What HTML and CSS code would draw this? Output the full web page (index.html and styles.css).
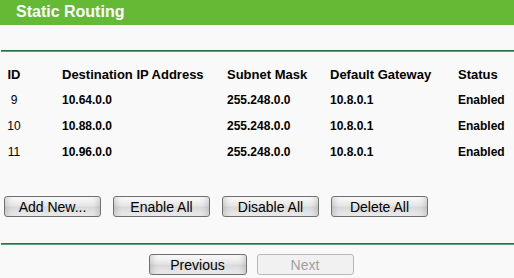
FILE: index.html
```html
<!DOCTYPE html>
<html lang="en">
<head>
    <meta charset="UTF-8">
    <title>Static Routing</title>
    <link rel="stylesheet" href="styles.css">
</head>
<body>

    <div class="title-bar">Static Routing</div>

    <div class="rule top-rule"></div>

    <!-- Routing entries -->
    <div class="route-table">
        <div class="cell head id">ID</div>
        <div class="cell head">Destination IP Address</div>
        <div class="cell head">Subnet Mask</div>
        <div class="cell head">Default Gateway</div>
        <div class="cell head">Status</div>

        <div class="cell id">9</div>
        <div class="cell bold">10.64.0.0</div>
        <div class="cell bold">255.248.0.0</div>
        <div class="cell bold">10.8.0.1</div>
        <div class="cell bold">Enabled</div>

        <div class="cell id">10</div>
        <div class="cell bold">10.88.0.0</div>
        <div class="cell bold">255.248.0.0</div>
        <div class="cell bold">10.8.0.1</div>
        <div class="cell bold">Enabled</div>

        <div class="cell id">11</div>
        <div class="cell bold">10.96.0.0</div>
        <div class="cell bold">255.248.0.0</div>
        <div class="cell bold">10.8.0.1</div>
        <div class="cell bold">Enabled</div>
    </div>

    <div class="actions">
        <button class="btn">Add New...</button>
        <button class="btn">Enable All</button>
        <button class="btn">Disable All</button>
        <button class="btn">Delete All</button>
    </div>

    <div class="rule bottom-rule"></div>

    <div class="paging">
        <button class="btn">Previous</button>
        <button class="btn" disabled>Next</button>
    </div>

</body>
</html>
```

FILE: styles.css
```css
body {
    margin: 0;
    background-color: #f9f9f9;
    font-family: "Liberation Sans", Arial, sans-serif;
    color: #000;
    width: 514px;
}

.title-bar {
    height: 25px;
    line-height: 24px;
    background-color: #64b935;
    color: #fff;
    font-weight: bold;
    font-size: 16px;
    padding-left: 16px;
}

.rule {
    height: 1px;
    background-color: #2c6e4c;
    border-bottom: 1px solid #5e9e78;
}
.top-rule {
    margin: 25px 0 0 1px;
}
.bottom-rule {
    margin: 26px 0 0 1px;
}

.route-table {
    display: grid;
    grid-template-columns: 55px 165px 103px 128px auto;
    grid-auto-rows: 26px;
    margin-top: 9px;
    padding-left: 7px;
    font-size: 12px;
}
.cell {
    display: flex;
    align-items: center;
}
.cell.head {
    font-weight: bold;
    font-size: 13px;
}
.cell.id {
    width: 14px;
    justify-content: center;
}
.cell.bold {
    font-weight: bold;
}

.actions {
    display: flex;
    gap: 12px;
    margin-top: 31px;
    padding-left: 4px;
}

.btn {
    width: 97px;
    height: 21px;
    padding: 0;
    font-family: "Liberation Sans", Arial, sans-serif;
    font-size: 14px;
    color: #000;
    border: 1px solid #707070;
    border-radius: 3px;
    background: linear-gradient(to bottom, #fbfbfb 0%, #e6e6e6 45%, #d9d9d9 55%, #ececec 100%);
    box-shadow: inset 6px 0 5px -3px rgba(0, 0, 0, 0.12), inset -6px 0 5px -3px rgba(0, 0, 0, 0.12);
}
.btn:disabled {
    color: #a0a0a0;
    border-color: #b8b8b8;
    background: #f1f1f1;
    box-shadow: none;
}

.paging {
    display: flex;
    justify-content: center;
    gap: 10px;
    margin-top: 9px;
    padding-right: 12px;
}
.paging .btn:first-child {
    width: 98px;
}
```
